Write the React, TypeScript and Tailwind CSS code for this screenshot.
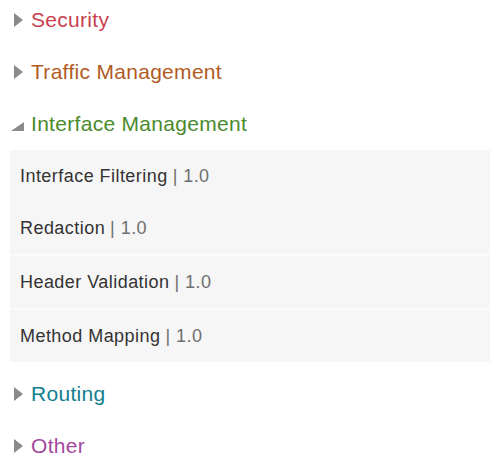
import React from 'react';

type Section = { name: string; color: string; open?: boolean };

const sections: Section[] = [
    { name: 'Security', color: 'text-[#c8414f]' },
    { name: 'Traffic Management', color: 'text-[#b25a1f]' },
    { name: 'Interface Management', color: 'text-[#4a8a2c]', open: true },
    { name: 'Routing', color: 'text-[#12808f]' },
    { name: 'Other', color: 'text-[#a4489e]' },
];

// groups of policies, a thin light line sits between groups
const policies: string[][] = [
    ['Interface Filtering', 'Redaction'],
    ['Header Validation'],
    ['Method Mapping'],
];

const Caret = ({ open }: { open?: boolean }) =>
    open ? (
        <svg width="14" height="14" viewBox="0 0 14 14" className="mr-[7px] ml-[10px] mt-[2px]">
            <polygon points="14,4 14,13 1,13" fill="#8a8a8a" />
        </svg>
    ) : (
        <svg width="10" height="14" viewBox="0 0 10 14" className="mr-[7px] ml-[14px]">
            <polygon points="0,0 9,7 0,14" fill="#8a8a8a" />
        </svg>
    );

export default function App() {
    return (
        <div className="w-[500px] h-[467px] overflow-hidden bg-white font-['Liberation_Sans',Arial,sans-serif]">
            <div className="-mt-[6px]">
                {sections.map((s) => (
                    <div key={s.name}>
                        <div className="h-[52px] flex items-center">
                            <Caret open={s.open} />
                            <span className={`text-[21px] tracking-[0.3px] ${s.color}`}>{s.name}</span>
                        </div>
                        {s.open && (
                            <div className="mx-[10px] mb-[6px] bg-[#f6f6f6] flex flex-col">
                                {policies.map((group, gi) => (
                                    <div key={gi} className={gi > 0 ? 'border-t-2 border-[#fcfcfc]' : ''}>
                                        {group.map((p) => (
                                            <div key={p} className="h-[52px] flex items-center pl-[10px] text-[18px] tracking-[0.45px] text-[#333]">
                                                {p}
                                                <span className="text-[#6f6f6f] ml-[5px]">| 1.0</span>
                                            </div>
                                        ))}
                                    </div>
                                ))}
                            </div>
                        )}
                    </div>
                ))}
            </div>
        </div>
    );
}
